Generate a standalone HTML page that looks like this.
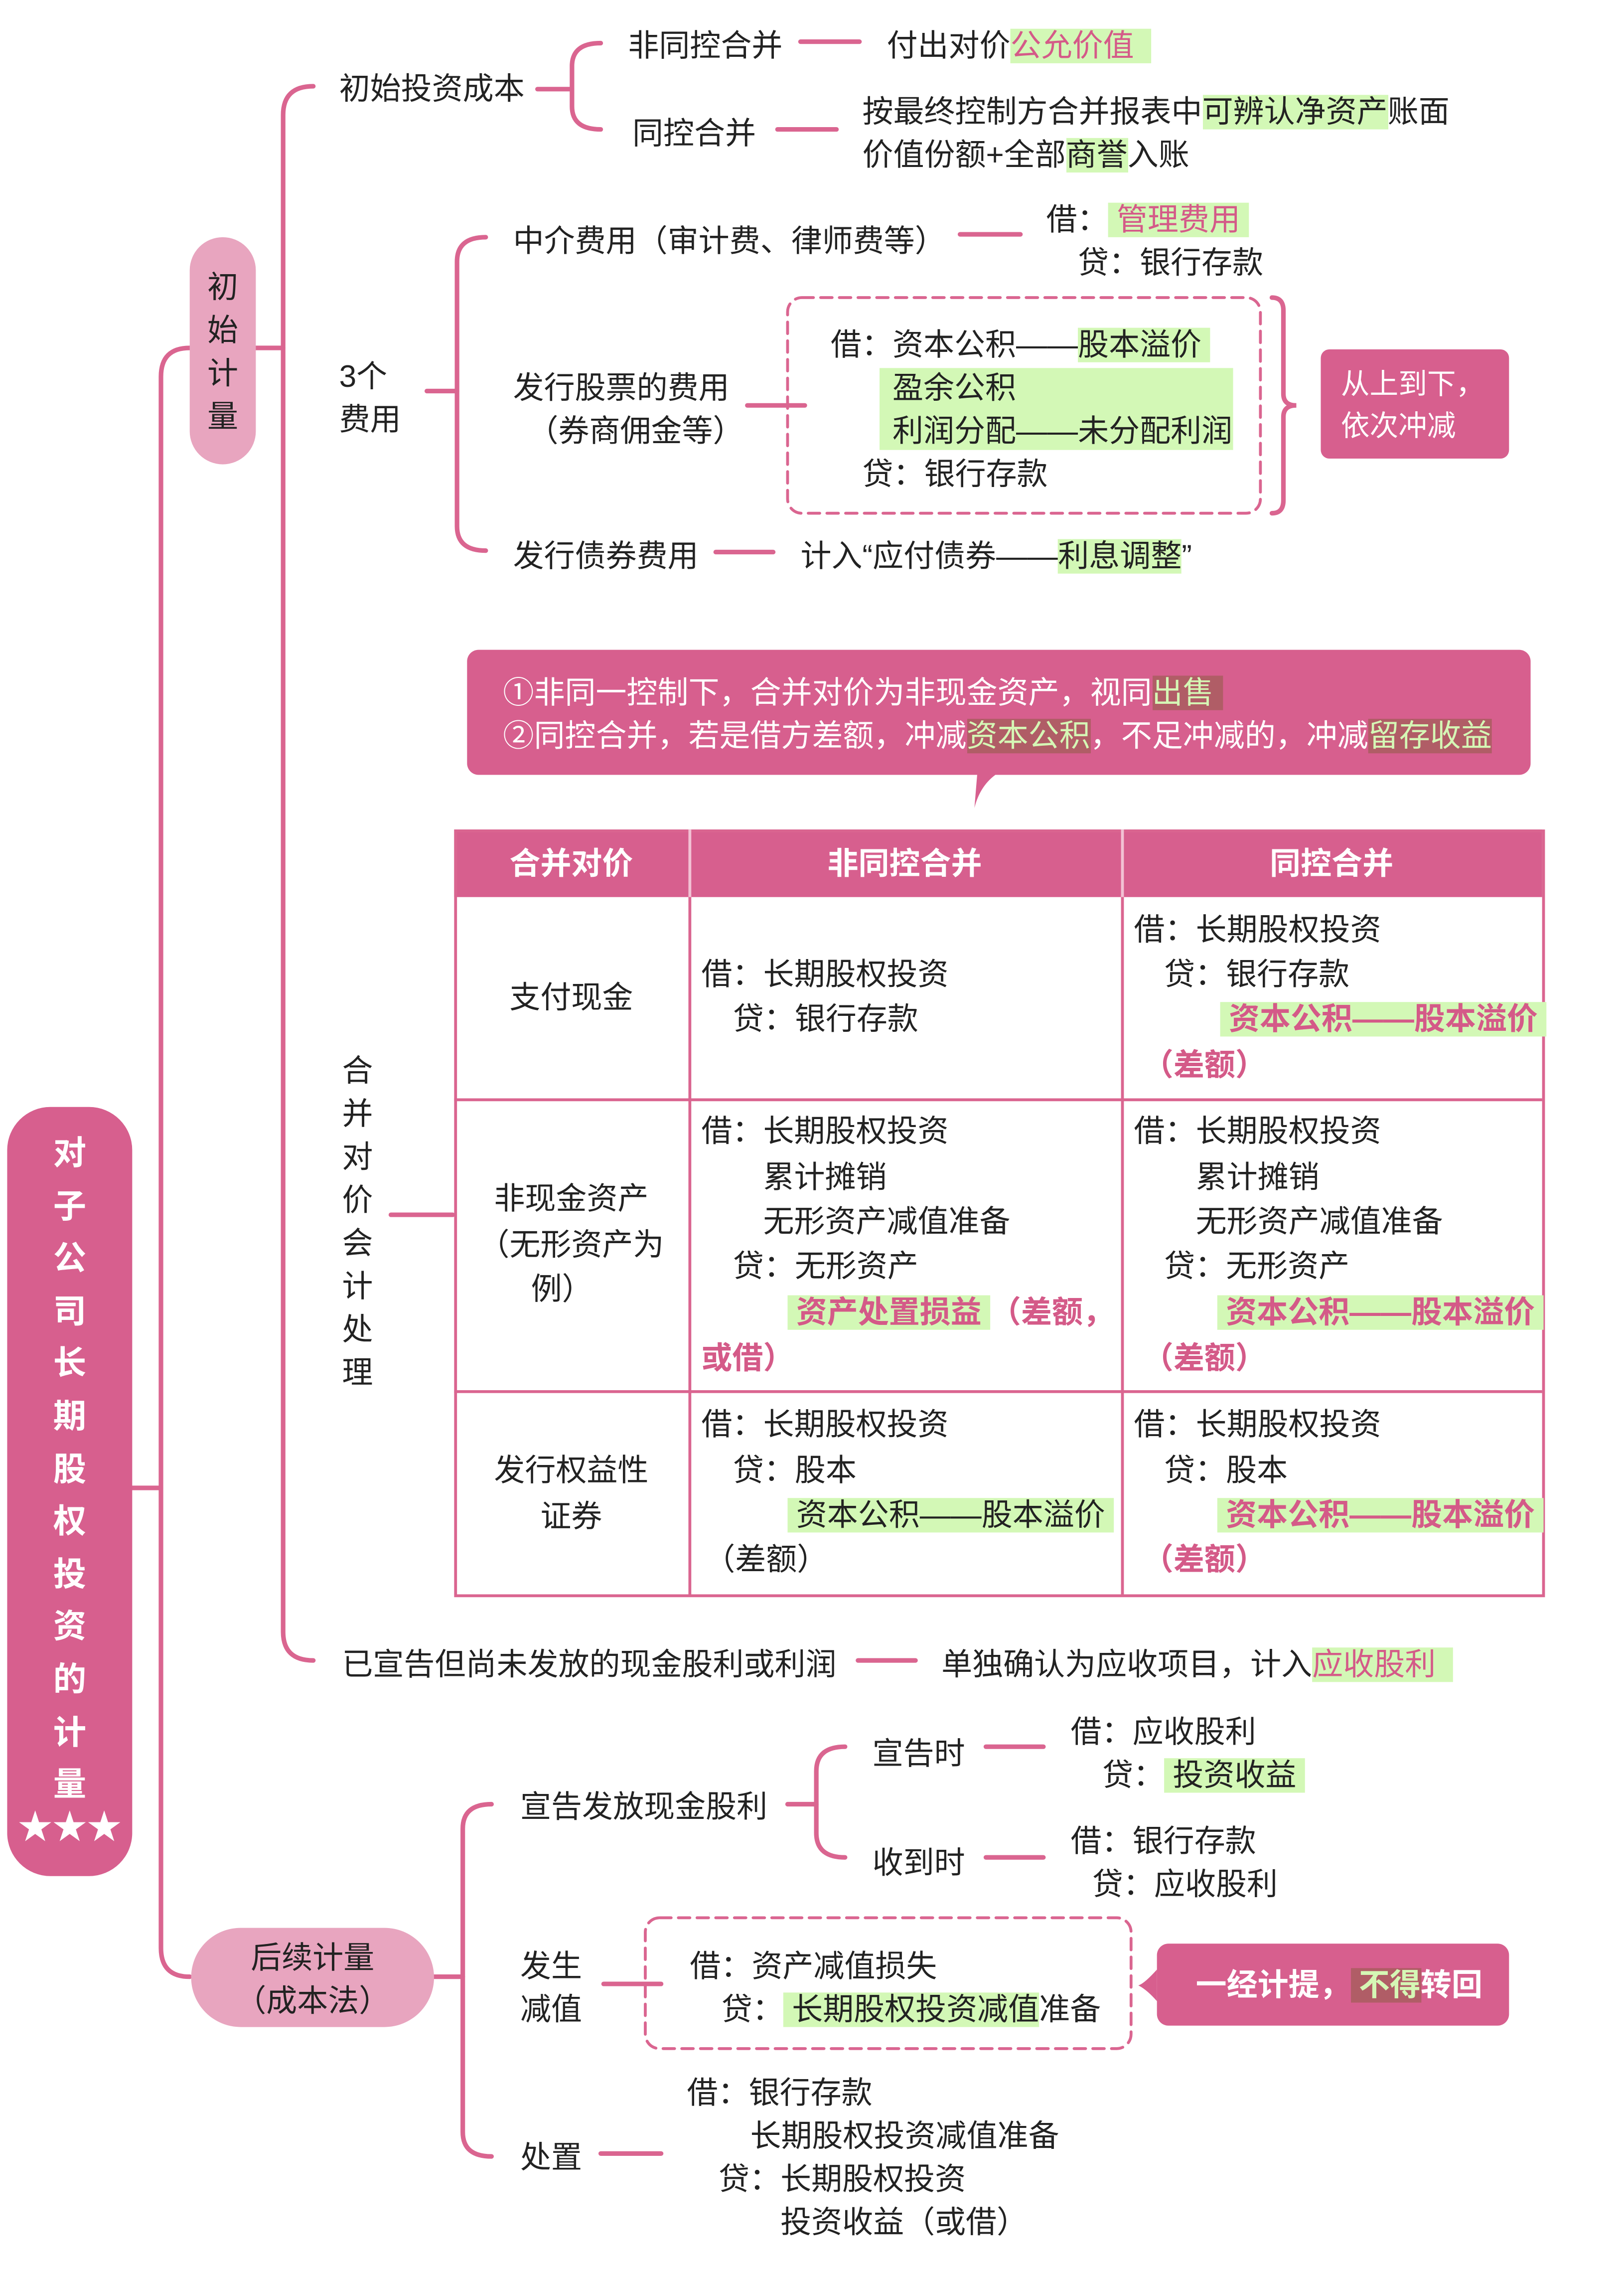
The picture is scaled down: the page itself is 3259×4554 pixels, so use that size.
<!DOCTYPE html>
<html><head><meta charset="utf-8"><style>
html,body{margin:0;padding:0;background:#fff;}
body{width:3259px;height:4552px;overflow:hidden;position:relative;}
#c{position:absolute;left:0;top:0;width:1130px;height:1579px;transform:scale(2.8841);transform-origin:0 0;font-family:"Liberation Sans","Noto Sans CJK SC",sans-serif;color:#222;}
.t{position:absolute;font-size:21.5px;line-height:30px;white-space:nowrap;}
.g{background:#d3f8b6;}
.pk{color:#d45a88;font-weight:bold;}
.hw{background:#b05d66;color:#d5f7b5;}
.box{position:absolute;}
</style></head><body><div id="c">
<svg width="1130" height="1579" style="position:absolute;left:0;top:0" fill="none" stroke="#da6590" stroke-width="3.2" stroke-linecap="round">
<path d="M92,1035 H112"/>
<path d="M132,242 Q112,242 112,262 V1355 Q112,1375 132,1375"/>
<path d="M178,242 H197"/>
<path d="M218,60 Q197,60 197,80 V1135 Q197,1155 218,1155"/>
<path d="M374,62 H398"/>
<path d="M418,30 Q398,30 398,46 V74 Q398,90 418,90"/>
<path d="M557,29 H598"/><path d="M541,90 H582"/>
<path d="M297,272 H318"/>
<path d="M338,165 Q318,165 318,182 V366 Q318,383 338,383"/>
<path d="M668,163 H710"/><path d="M520,282 H560"/><path d="M498,384 H538"/>
<path d="M885,207 Q893,207 893,216 V274 Q893,282 902,282 Q893,282 893,290 V348 Q893,357 885,357"/>
<path d="M272,845 H315"/>
<path d="M597,1155 H637"/>
<path d="M302,1375 H322"/>
<path d="M342,1255 Q322,1255 322,1272 V1483 Q322,1500 342,1500"/>
<path d="M548,1255 H568"/>
<path d="M588,1215 Q568,1215 568,1232 V1275 Q568,1292 588,1292"/>
<path d="M686,1215 H726"/><path d="M686,1292 H726"/>
<path d="M420,1380 H460"/><path d="M418,1498 H460"/>
<rect x="548" y="207" width="329" height="150" rx="10" stroke-width="2" stroke-dasharray="8,5"/>
<rect x="449" y="1334" width="338" height="91" rx="10" stroke-width="2" stroke-dasharray="8,5"/>
</svg>

<div class="box" style="left:5px;top:770px;width:87px;height:535px;background:#d75f8e;border-radius:30px;"></div>
<div class="t" style="left:5px;top:784px;width:87px;text-align:center;color:#fff;font-weight:bold;font-size:23px;line-height:36.6px;white-space:normal;">对<br>子<br>公<br>司<br>长<br>期<br>股<br>权<br>投<br>资<br>的<br>计<br>量</div>
<div class="t" style="left:5px;top:1257px;width:87px;text-align:center;color:#fff;font-size:24px;">★★★</div>

<div class="box" style="left:132px;top:165px;width:46px;height:158px;background:#e8a5bf;border-radius:23px;"></div>
<div class="t" style="left:132px;top:185px;width:46px;text-align:center;line-height:30px;white-space:normal;">初<br>始<br>计<br>量</div>

<div class="box" style="left:133px;top:1341px;width:169px;height:69px;background:#e8a5bf;border-radius:35px;"></div>
<div class="t" style="left:133px;top:1347px;width:169px;text-align:center;white-space:normal;">后续计量<br>（成本法）</div>

<div class="t" style="left:236px;top:47px;">初始投资成本</div>
<div class="t" style="left:437px;top:17px;">非同控合并</div>
<div class="t" style="left:440px;top:78px;">同控合并</div>
<div class="t" style="left:617px;top:17px;">付出对价<span class="g pk" style="font-weight:normal">公允价值&nbsp;&nbsp;</span></div>
<div class="t" style="left:600px;top:63px;">按最终控制方合并报表中<span class="g">可辨认净资产</span>账面</div>
<div class="t" style="left:600px;top:93px;">价值份额+全部<span class="g">商誉</span>入账</div>

<div class="t" style="left:236px;top:247px;">3个</div>
<div class="t" style="left:236px;top:277px;">费用</div>
<div class="t" style="left:357px;top:153px;">中介费用（审计费、律师费等）</div>
<div class="t" style="left:728px;top:138px;">借：<span class="g pk" style="font-weight:normal">&nbsp;管理费用&nbsp;</span></div>
<div class="t" style="left:750px;top:168px;">贷：银行存款</div>
<div class="t" style="left:357px;top:255px;">发行股票的费用</div>
<div class="t" style="left:367px;top:285px;">（券商佣金等）</div>
<div class="box g" style="left:612px;top:256px;width:246px;height:57px;"></div>
<div class="t" style="left:578px;top:225px;">借：资本公积——<span class="g">股本溢价&nbsp;</span></div>
<div class="t" style="left:621px;top:255px;">盈余公积</div>
<div class="t" style="left:621px;top:285px;">利润分配——未分配利润</div>
<div class="t" style="left:600px;top:315px;">贷：银行存款</div>
<div class="box" style="left:919px;top:243px;width:131px;height:76px;background:#d75f8e;border-radius:6px;"></div>
<div class="t" style="left:933px;top:254px;color:#fff;font-size:20px;line-height:29px;white-space:normal;">从上到下，<br>依次冲减</div>
<div class="t" style="left:357px;top:372px;">发行债券费用</div>
<div class="t" style="left:557px;top:372px;">计入“应付债券——<span class="g">利息调整</span>”</div>

<div class="box" style="left:325px;top:452px;width:740px;height:87px;background:#d75f8e;border-radius:8px;"></div>
<svg width="1130" height="1579" style="position:absolute;left:0;top:0"><path d="M680,538 L694,538 Q682,546 678,562 Z" fill="#d75f8e"/><path d="M805,1370 Q796,1380 792,1381 Q798,1384 805,1392 Z" fill="#d75f8e"/></svg>
<div class="t" style="left:350px;top:467px;color:#fff;font-size:21.5px;">①非同一控制下，合并对价为非现金资产，视同<span class="hw">出售&nbsp;</span></div>
<div class="t" style="left:350px;top:497px;color:#fff;font-size:21.5px;">②同控合并，若是借方差额，冲减<span class="hw">资本公积</span>，不足冲减的，冲减<span class="hw">留存收益</span></div>

<div class="box" style="left:316px;top:577px;width:757px;height:47px;background:#d75f8e;"></div>
<div class="box" style="left:316px;top:577px;width:755px;height:530px;border:2px solid #da6590;"></div>
<div class="box" style="left:479px;top:577px;width:2px;height:532px;background:#da6590;"></div>
<div class="box" style="left:780px;top:577px;width:2px;height:532px;background:#da6590;"></div>
<div class="box" style="left:479px;top:577px;width:2px;height:47px;background:#f2c2d4;"></div>
<div class="box" style="left:780px;top:577px;width:2px;height:47px;background:#f2c2d4;"></div>
<div class="box" style="left:316px;top:764px;width:757px;height:2px;background:#da6590;"></div>
<div class="box" style="left:316px;top:967px;width:757px;height:2px;background:#da6590;"></div>
<div class="t" style="left:316px;top:586px;width:163px;text-align:center;color:#fff;font-weight:bold;">合并对价</div>
<div class="t" style="left:479px;top:586px;width:301px;text-align:center;color:#fff;font-weight:bold;">非同控合并</div>
<div class="t" style="left:780px;top:586px;width:293px;text-align:center;color:#fff;font-weight:bold;">同控合并</div>

<div class="t" style="left:316px;top:679px;width:163px;text-align:center;">支付现金</div>
<div class="t" style="left:488px;top:663px;">借：长期股权投资</div>
<div class="t" style="left:510px;top:694px;">贷：银行存款</div>
<div class="t" style="left:789px;top:632px;">借：长期股权投资</div>
<div class="t" style="left:810px;top:663px;">贷：银行存款</div>
<div class="t pk" style="left:849px;top:694px;"><span class="g">&nbsp;资本公积——股本溢价&nbsp;</span></div>
<div class="t pk" style="left:795px;top:726px;">（差额）</div>

<div class="t" style="left:316px;top:819px;width:163px;text-align:center;">非现金资产</div>
<div class="t" style="left:316px;top:851px;width:163px;text-align:center;">（无形资产为</div>
<div class="t" style="left:316px;top:882px;width:150px;text-align:center;">例）</div>
<div class="t" style="left:488px;top:772px;">借：长期股权投资</div>
<div class="t" style="left:531px;top:804px;">累计摊销</div>
<div class="t" style="left:531px;top:835px;">无形资产减值准备</div>
<div class="t" style="left:510px;top:866px;">贷：无形资产</div>
<div class="t pk" style="left:548px;top:898px;"><span class="g">&nbsp;资产处置损益&nbsp;</span>（差额，</div>
<div class="t pk" style="left:488px;top:930px;">或借）</div>
<div class="t" style="left:789px;top:772px;">借：长期股权投资</div>
<div class="t" style="left:832px;top:804px;">累计摊销</div>
<div class="t" style="left:832px;top:835px;">无形资产减值准备</div>
<div class="t" style="left:810px;top:866px;">贷：无形资产</div>
<div class="t pk" style="left:847px;top:898px;"><span class="g">&nbsp;资本公积——股本溢价&nbsp;</span></div>
<div class="t pk" style="left:795px;top:930px;">（差额）</div>

<div class="t" style="left:316px;top:1008px;width:163px;text-align:center;">发行权益性</div>
<div class="t" style="left:316px;top:1040px;width:163px;text-align:center;">证券</div>
<div class="t" style="left:488px;top:976px;">借：长期股权投资</div>
<div class="t" style="left:510px;top:1008px;">贷：股本</div>
<div class="t" style="left:548px;top:1039px;"><span class="g">&nbsp;资本公积——股本溢价&nbsp;</span></div>
<div class="t" style="left:490px;top:1070px;">（差额）</div>
<div class="t" style="left:789px;top:976px;">借：长期股权投资</div>
<div class="t" style="left:810px;top:1008px;">贷：股本</div>
<div class="t pk" style="left:847px;top:1039px;"><span class="g">&nbsp;资本公积——股本溢价&nbsp;</span></div>
<div class="t pk" style="left:795px;top:1070px;">（差额）</div>

<div class="t" style="left:238px;top:730px;line-height:30px;white-space:normal;width:22px;">合<br>并<br>对<br>价<br>会<br>计<br>处<br>理</div>

<div class="t" style="left:238px;top:1143px;">已宣告但尚未发放的现金股利或利润</div>
<div class="t" style="left:655px;top:1143px;">单独确认为应收项目，计入<span class="g pk" style="font-weight:normal">应收股利&nbsp;&nbsp;</span></div>

<div class="t" style="left:362px;top:1242px;">宣告发放现金股利</div>
<div class="t" style="left:607px;top:1205px;">宣告时</div>
<div class="t" style="left:607px;top:1281px;">收到时</div>
<div class="t" style="left:745px;top:1190px;">借：应收股利</div>
<div class="t" style="left:767px;top:1220px;">贷：<span class="g">&nbsp;投资收益&nbsp;</span></div>
<div class="t" style="left:745px;top:1266px;">借：银行存款</div>
<div class="t" style="left:760px;top:1296px;">贷：应收股利</div>

<div class="t" style="left:362px;top:1353px;">发生</div>
<div class="t" style="left:362px;top:1383px;">减值</div>
<div class="t" style="left:480px;top:1353px;">借：资产减值损失</div>
<div class="t" style="left:502px;top:1383px;">贷：<span class="g">&nbsp;长期股权投资减值</span>准备</div>
<div class="box" style="left:805px;top:1352px;width:245px;height:57px;background:#d75f8e;border-radius:8px;"></div>
<div class="t" style="left:832px;top:1366px;color:#fff;font-weight:bold;">一经计提，<span class="hw">&nbsp;不得</span>转回</div>

<div class="t" style="left:362px;top:1486px;">处置</div>
<div class="t" style="left:478px;top:1441px;">借：银行存款</div>
<div class="t" style="left:522px;top:1471px;">长期股权投资减值准备</div>
<div class="t" style="left:500px;top:1501px;">贷：长期股权投资</div>
<div class="t" style="left:543px;top:1531px;">投资收益（或借）</div>
</div></body></html>
